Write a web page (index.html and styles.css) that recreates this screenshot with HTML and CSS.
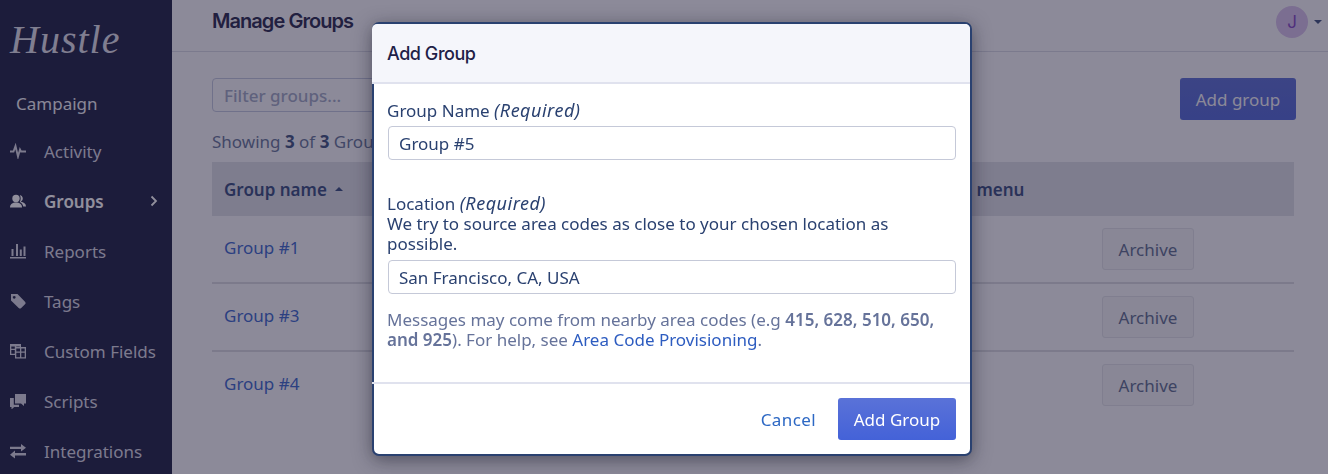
FILE: index.html
```html
<!DOCTYPE html>
<html lang="en">
<head>
<meta charset="utf-8">
<title>Manage Groups</title>
<link rel="stylesheet" href="styles.css">
</head>
<body>
<div class="app">
  <aside class="sidebar">
    <div class="logo">Hustle</div>
    <div class="campaign">Campaign</div>
    <nav class="nav">
      <a class="nav-item"><svg class="ico" viewBox="0 0 16 16"><path d="M0 8.500h3.500L5.500 3 8 13.500l2-7 1 2h5" fill="none" stroke="currentColor" stroke-width="1.900"/></svg><span>Activity</span></a>
      <a class="nav-item active"><svg class="ico" viewBox="0 0 16 16"><circle cx="6" cy="5.500" r="3.700" fill="currentColor"/><path d="M0 14.500c0-3.500 2.500-5 6-5s6 1.500 6 5z" fill="currentColor"/><path d="M9.800 2a3.600 3.600 0 0 1 1 6.800c2.900.3 5.200 2 5.200 4.700h-2.800c-.4-2-1.700-3.700-3.500-4.500 1.300-1.800 1.300-5 .1-7z" fill="currentColor"/></svg><span>Groups</span><svg class="chev" viewBox="0 0 8 12"><path d="M1.500 1.500 6 6l-4.500 4.500" fill="none" stroke="currentColor" stroke-width="1.800"/></svg></a>
      <a class="nav-item"><svg class="ico" viewBox="0 0 16 16"><path d="M0 14h16v1.500H0zM1.500 6h2v7h-2zM6 1h2v12H6zM9.800 6.500h2V13h-2zM13.500 3.500h2V13h-2z" fill="currentColor"/></svg><span>Reports</span></a>
      <a class="nav-item"><svg class="ico" viewBox="0 0 16 16"><path d="M1 1h6.500L15 8.700a1.800 1.800 0 0 1 0 2.500l-3.800 3.800a1.800 1.800 0 0 1-2.500 0L1 7.500zM4.200 2.900a1.400 1.400 0 1 0 .01 0z" fill="currentColor" fill-rule="evenodd"/></svg><span>Tags</span></a>
      <a class="nav-item"><svg class="ico" viewBox="0 0 16 16"><path d="M0 1h11v3h5v11.500H5V12H0zM1.300 3.500v2.300h3.500V3.500zm5 0v.5h3.400v-.5zM1.300 7v3.700h3.500V7zm5-1.500v3h3.700v-3zm5 0v3h3.400v-3zM6.300 9.800v4.400h3.700V9.800zm5 0v4.400h3.400V9.800z" fill="currentColor" fill-rule="evenodd"/></svg><span>Custom Fields</span></a>
      <a class="nav-item"><svg class="ico" viewBox="0 0 16 16"><path d="M5 1h11v9.500h-2V13l-3-2.500H5z" fill="currentColor"/><path d="M0 5h3.800v6.800H9v2.200H4.200L1.500 16.500V14H0z" fill="currentColor"/></svg><span>Scripts</span></a>
      <a class="nav-item"><svg class="ico" viewBox="0 0 16 16"><path d="M0 3.800h11V1l5 3.800-5 3.700V6H0zM16 10H5V7.500L0 11.700 5 15.500V12.500h11z" fill="currentColor"/></svg><span>Integrations</span></a>
    </nav>
  </aside>
  <main class="main">
    <header class="topbar">
      <h1 class="page-title">Manage Groups</h1>
      <div class="user"><span class="avatar">J</span><span class="caret-down"></span></div>
    </header>
    <section class="content">
      <div class="toolbar">
        <input class="filter" placeholder="Filter groups...">
        <button class="btn-primary-lg" type="button">Add group</button>
      </div>
      <p class="showing">Showing <b>3</b> of <b>3</b> Groups</p>
      <div class="table">
        <div class="thead">
          <div class="cell-name">Group name <span class="caret-up"></span></div>
          <div class="cell-action">Action menu</div>
        </div>
        <div class="row"><a class="cell-name">Group #1</a><button class="archive" type="button">Archive</button></div>
        <div class="row"><a class="cell-name">Group #3</a><button class="archive" type="button">Archive</button></div>
        <div class="row"><a class="cell-name">Group #4</a><button class="archive" type="button">Archive</button></div>
      </div>
    </section>
  </main>
</div>
<div class="overlay">
  <div class="modal">
    <div class="modal-head">Add Group</div>
    <div class="modal-body">
      <label class="label">Group Name <em>(Required)</em></label>
      <input class="field first" value="Group #5">
      <label class="label second">Location <em>(Required)</em><br>We try to source area codes as close to your chosen location as possible.</label>
      <input class="field" value="San Francisco, CA, USA">
      <p class="help">Messages may come from nearby area codes (e.g <b>415, 628, 510, 650, and 925</b>). For help, see <a>Area Code Provisioning</a>.</p>
    </div>
    <div class="modal-foot">
      <a class="cancel">Cancel</a>
      <button class="submit" type="button">Add Group</button>
    </div>
  </div>
</div>
</body>
</html>
```
FILE: styles.css
```css
* { box-sizing: border-box; }
html, body { margin: 0; height: 474px; overflow: hidden; }
body { font-family: "Noto Sans", sans-serif; font-size: 17px; color: #364a78; background: #fff; }
.app { display: flex; height: 474px; }
.sidebar { width: 172px; flex: none; background: #14183c; color: #fff; height: 474px; overflow: hidden; }
.logo { font-family: "Liberation Serif", serif; font-style: italic; font-size: 40px; line-height: 44px; padding: 18px 0 0 10px; letter-spacing: 1px; color: #dcdce6; }
.campaign { padding-left: 16px; margin-top: 30px; line-height: 24px; color: #eeeef4; }
.nav { margin-top: 10px; }
.nav-item { display: flex; align-items: center; height: 50px; padding-left: 10px; color: #d4d4e0; }
.nav-item.active { font-weight: 600; color: #fff; }
.ico { width: 16px; height: 16px; margin-right: 18px; flex: none; }
.chev { width: 8px; height: 12px; margin-left: 46px; }
.main { flex: 1; min-width: 0; background: #f5f5f8; }
.topbar { height: 52px; border-bottom: 1px solid #d2d4e0; display: flex; justify-content: space-between; padding: 6px 6px 0 40px; }
.page-title { margin: 0; font-family: Inter, sans-serif; font-size: 20px; font-weight: 600; line-height: 30px; color: #1f2147; letter-spacing: -.95px; }
.user { display: flex; align-items: center; height: 32px; }
.avatar { width: 32px; height: 32px; border-radius: 50%; background: #d2bce8; color: #7d3fc0; text-align: center; line-height: 32px; font-size: 17px; font-family: Inter, sans-serif; }
.caret-down { width: 0; height: 0; border: 4px solid transparent; border-top-color: #364a78; border-bottom: 0; margin-left: 6px; }
.content { padding: 26px 34px 0 40px; }
.toolbar { display: flex; justify-content: space-between; align-items: flex-start; height: 42px; }
.filter { width: 340px; height: 34px; border: 1px solid #bcc2da; border-radius: 4px; padding: 0 11px; font: inherit; color: #364a78; background: #f5f5f8; }
.filter::placeholder { color: #9aa3c0; font-weight: 500; }
.btn-primary-lg { width: 116px; height: 42px; border: 0; border-radius: 3px; background: linear-gradient(#5468d0, #4a62d4); color: #f2f2f6; font: inherit; margin-right: -2px; }
.showing { margin: 10px 0 0; line-height: 24px; color: #5f6f94; }
.showing b { color: #364a78; }
.table { margin-top: 8px; }
.thead { height: 54px; background: #d9dae2; display: flex; align-items: center; font-weight: 600; color: #2e4478; }
.cell-name { padding-left: 12px; }
.thead .cell-name { width: 707px; }
.caret-up { display: inline-block; vertical-align: middle; width: 0; height: 0; border: 4px solid transparent; border-bottom-color: #2e4478; border-top: 0; margin: 0 0 3px 4px; }
.row { height: 68px; display: flex; align-items: center; justify-content: space-between; border-bottom: 2px solid #d4d5dc; padding-right: 100px; color: #3260c8; }
.row .cell-name { padding-bottom: 4px; }
.row:last-child { border-bottom-color: transparent; }
.archive { width: 92px; height: 42px; border: 1px solid #dcdde4; border-radius: 3px; background: #eeeef2; color: #57678a; font: inherit; }
.overlay { position: fixed; inset: 0; background: rgba(35, 32, 58, .5); display: flex; justify-content: center; align-items: flex-start; padding: 22px 0 0 16px; }
.modal { width: 600px; height: 434px; background: #fff; border: 2px solid #2a4170; border-radius: 7px; box-shadow: 0 4px 18px rgba(20, 20, 40, .5); display: flex; flex-direction: column; }
.modal-head { height: 60px; margin: 0 0 0 -2px; padding-left: 15px; background: #f5f6fb; border-bottom: 2px solid #e0e2ee; border-radius: 5px 5px 0 0; font-family: Inter, sans-serif; font-size: 18px; font-weight: 500; letter-spacing: -.45px; line-height: 60px; color: #1f2147; }
.modal-body { flex: 1; padding: 17px 14px 0 13px; line-height: 20px; color: #2a4170; }
.label { display: block; }
.label em { font-style: italic; font-size: 18px; line-height: 1; letter-spacing: .5px; }
.second { margin-top: 34px; }
.field { display: block; width: 568px; height: 34px; margin: 6px 0 0 1px; border: 1px solid #c5c9d8; border-radius: 4px; padding: 0 10px; font: inherit; color: #2a4170; }
.field.first { margin-top: 5px; padding-top: 1px; }
.help { margin: 16px 0 0; color: #66739a; }
.help b { font-weight: 600; }
.help a { color: #2d5cc0; }
.modal-foot { height: 72px; margin-left: -2px; border-top: 2px solid #e0e2ee; display: flex; justify-content: flex-end; align-items: flex-start; padding: 14px 14px 0 0; }
.cancel { color: #2d68c4; line-height: 42px; margin-right: 22px; padding-top: 1px; letter-spacing: .4px; }
.submit { width: 118px; height: 42px; border: 0; border-radius: 3px; background: linear-gradient(#5a72d8, #4462d8); color: #fff; font: inherit; }
```
